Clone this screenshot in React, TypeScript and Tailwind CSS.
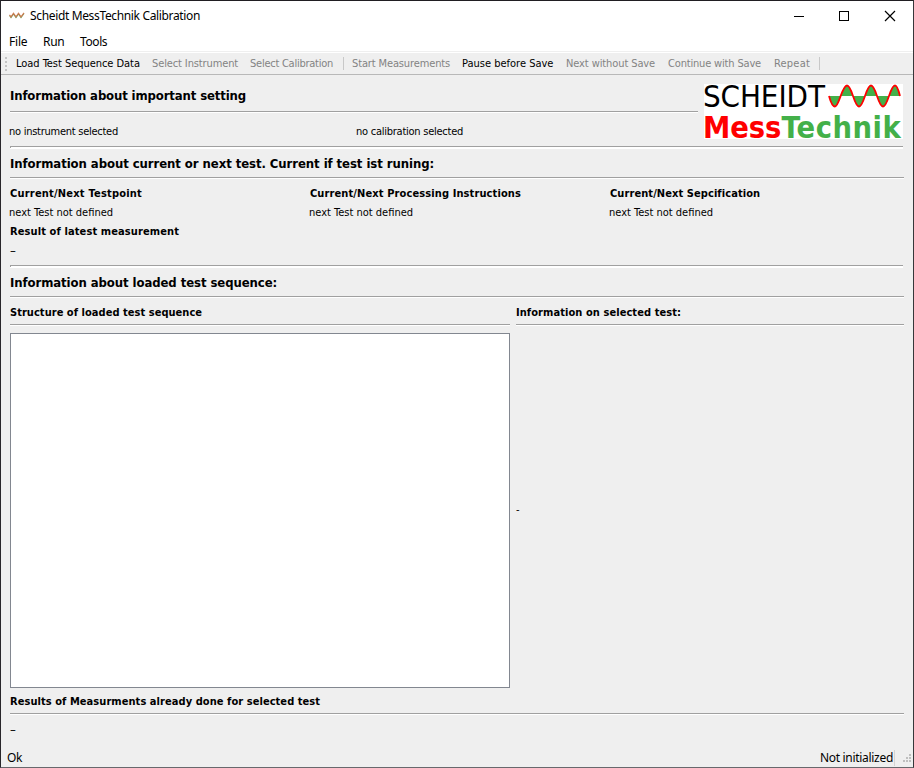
function Rule({ className = "" }: { className?: string }) {
  return <div className={`h-0.5 shrink-0 border-t border-[#a0a0a0] bg-white ${className}`} />;
}

function ThickRule({ className = "" }: { className?: string }) {
  return (
    <div className={`h-[3px] w-[893px] shrink-0 border-t border-[#a0a0a0] bg-white ${className}`}>
      <div className="h-px w-px bg-[#a0a0a0]" />
    </div>
  );
}

function Logo() {
  return (
    <div className="mt-[9px] h-[55px] w-[199px] shrink-0 bg-white">
      <div className="flex h-[27px]">
        <div className="-ml-px w-[125px] text-[31px] leading-[25px] tracking-[-0.1px] whitespace-nowrap">SCHEIDT</div>
        <svg className="shrink-0" width="74" height="25" viewBox="0 0 74 25">
          <path
            d="M1 12 C4 23 6 22.5 7 22.5 C11 22.5 14 1.5 19 1.5 C24 1.5 26 22.5 31 22.5 C36 22.5 38 1.5 43 1.5 C48 1.5 50 22.5 55 22.5 C60 22.5 62 1.5 67 1.5 C69 1.5 71 8 72 12 Z"
            fill="#43b049"
          />
          <path
            d="M1 12 C4 23 6 22.5 7 22.5 C11 22.5 14 1.5 19 1.5 C24 1.5 26 22.5 31 22.5 C36 22.5 38 1.5 43 1.5 C48 1.5 50 22.5 55 22.5 C60 22.5 62 1.5 67 1.5 C69 1.5 71 8 72 12"
            fill="none"
            stroke="#f00"
            strokeWidth="1.8"
          />
        </svg>
      </div>
      <div className="-ml-px flex pt-[3px] text-[30.5px] leading-[27px] font-bold whitespace-nowrap">
        <span className="tracking-[-0.05px] text-[#ff0000]">Mess</span>
        <span className="tracking-[0.5px] text-[#43b049]">Technik</span>
      </div>
    </div>
  );
}

function TitleBar() {
  return (
    <div className="flex h-[30px] shrink-0 items-center bg-white font-['Noto_Sans',sans-serif] text-xs">
      <svg className="ml-2 shrink-0" width="16" height="8" viewBox="0 0 16 8" fill="none" strokeWidth="1.1">
        <path d="M0.5 3.5 L2 5.5 L4.5 2 L7 5.5 L9.5 2 L12 5.5 L15 1.5" stroke="#6f9a55" />
        <path d="M0.5 2.8 L2 4.8 L4.5 1.3 L7 4.8 L9.5 1.3 L12 4.8 L15 0.8" stroke="#d07a50" />
      </svg>
      <span className="ml-[5px] flex-1 tracking-[-0.35px]">Scheidt MessTechnik Calibration</span>
      <svg className="shrink-0" width="120" height="12" viewBox="0 0 120 12" fill="none" stroke="#000" shapeRendering="crispEdges">
        <path d="M1 6.5 H11" />
        <rect x="46.5" y="1.5" width="9" height="9" />
        <path d="M92 1 L102 11 M102 1 L92 11" strokeWidth="1.2" shapeRendering="auto" />
      </svg>
    </div>
  );
}

function ToolBar() {
  return (
    <div className="flex h-[22px] shrink-0 items-center border-b border-[#b8b8b8] text-[11px] whitespace-nowrap text-[#838383]">
      <div className="ml-1 flex w-[11px] flex-col gap-0.5">
        <i className="size-0.5 bg-[#c4c4c4]" />
        <i className="size-0.5 bg-[#c4c4c4]" />
        <i className="size-0.5 bg-[#c4c4c4]" />
        <i className="size-0.5 bg-[#c4c4c4]" />
      </div>
      <span className="w-[136px] pt-0.5 tracking-[-0.04px] text-black">Load Test Sequence Data</span>
      <span className="w-[98px] pt-0.5 tracking-[-0.12px]">Select Instrument</span>
      <span className="w-[93px] pt-0.5 tracking-[-0.25px]">Select Calibration</span>
      <i className="h-[13px] w-px bg-[#c8c8c8]" />
      <span className="ml-2 w-[110px] pt-0.5 tracking-[-0.13px]">Start Measurements</span>
      <span className="w-[104px] pt-0.5 text-black">Pause before Save</span>
      <span className="w-[102px] pt-0.5 tracking-[-0.1px]">Next without Save</span>
      <span className="w-[106px] pt-0.5 tracking-[-0.17px]">Continue with Save</span>
      <span className="w-[45px] pt-0.5 tracking-[0.2px]">Repeat</span>
      <i className="h-[13px] w-px bg-[#c8c8c8]" />
    </div>
  );
}

function Grip() {
  return (
    <svg width="8" height="8" viewBox="0 0 8 8" fill="#bfbfbf" shapeRendering="crispEdges">
      <path d="M6 0h2v2h-2z M3 3h2v2h-2z M6 3h2v2h-2z M0 6h2v2h-2z M3 6h2v2h-2z M6 6h2v2h-2z" />
    </svg>
  );
}

export default function App() {
  return (
    <div className="flex h-[768px] w-[914px] flex-col overflow-hidden border border-t-[#201e22] border-r-[#37373a] border-b-[#68686c] border-l-[#28262a] bg-[#efefef] font-['DejaVu_Sans_Condensed','DejaVu_Sans',sans-serif] text-[11px] text-black">
      <TitleBar />
      <div className="flex h-[20px] shrink-0 items-center bg-white pt-0.5 pl-2 font-['Noto_Sans',sans-serif] text-xs">
        <span className="w-[34px] tracking-[-0.2px]">File</span>
        <span className="w-[37px] tracking-[-0.3px]">Run</span>
        <span className="tracking-[-0.4px]">Tools</span>
      </div>
      <div className="h-0.5 shrink-0 border-b border-white" />
      <ToolBar />

      <main className="flex flex-1 flex-col pl-[9px]">
        <div className="flex h-[71px] shrink-0">
          <div className="w-[694px] shrink-0">
            <h1 className="mt-[11px] h-[20px] text-[13px] leading-[20px] font-bold tracking-[-0.13px]">Information about important setting</h1>
            <Rule className="mt-[5px] w-[688px]" />
            <div className="mt-[9px] -ml-px flex h-[20px] leading-[20px]">
              <span className="w-[347px] tracking-[-0.26px]">no instrument selected</span>
              <span className="tracking-[-0.25px]">no calibration selected</span>
            </div>
          </div>
          <Logo />
        </div>
        <ThickRule />
        <h1 className="mt-[5px] h-[20px] text-[13px] leading-[20px] font-bold tracking-[-0.07px]">Information about current or next test. Current if test ist runing:</h1>
        <Rule className="mt-[3px] w-[894px]" />
        <div className="mt-[5px] grid h-[38px] grid-cols-[300px_300px_294px] grid-rows-[19px_19px] leading-[19px]">
          <b className="tracking-[0.21px]">Current/Next Testpoint</b>
          <b className="tracking-[0.11px]">Current/Next Processing Instructions</b>
          <b className="tracking-[0.08px]">Current/Next Sepcification</b>
          <span className="-ml-px">next Test not defined</span>
          <span className="-ml-px">next Test not defined</span>
          <span className="-ml-px">next Test not defined</span>
        </div>
        <b className="h-[19px] leading-[19px] tracking-[0.11px]">Result of latest measurement</b>
        <span className="h-[19px] text-[13px] leading-[19px]">–</span>
        <ThickRule className="mt-[5px]" />
        <h1 className="mt-[5px] h-[20px] text-[13px] leading-[20px] font-bold tracking-[-0.08px]">Information about loaded test sequence:</h1>
        <Rule className="mt-[3px] w-[894px]" />
        <div className="flex h-[390px] shrink-0 gap-[6px]">
          <section className="flex w-[500px] flex-col">
            <b className="mt-[5px] h-[20px] leading-[20px] tracking-[0.04px]">Structure of loaded test sequence</b>
            <Rule className="mt-px" />
            <div className="mt-[7px] h-[355px] border border-[#828790] bg-white" />
          </section>
          <section className="flex w-[388px] flex-col">
            <b className="mt-[5px] h-[20px] leading-[20px] tracking-[0.07px]">Information on selected test:</b>
            <Rule className="mt-px" />
            <div className="flex flex-1 items-center pt-[7px]">-</div>
          </section>
        </div>
        <b className="mt-1 h-[20px] shrink-0 leading-[20px] tracking-[0.06px]">Results of Measurments already done for selected test</b>
        <Rule className="mt-px w-[894px]" />
        <span className="mt-[5px] h-[20px] text-[13px] leading-[20px]">–</span>
      </main>

      <footer className="flex h-[19px] shrink-0 items-center pr-0.5 pl-[6px] font-['Noto_Sans',sans-serif] text-xs">
        <span className="flex-1 tracking-[-0.3px]">Ok</span>
        <span className="tracking-[-0.3px]">Not initialized</span>
        <i className="mr-[8px] ml-px h-4 w-px bg-[#d4d4d4]" />
        <Grip />
      </footer>
    </div>
  );
}
